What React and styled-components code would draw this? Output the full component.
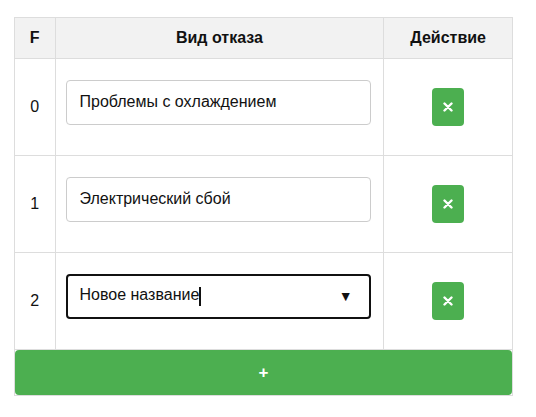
import React from 'react'
import styled, {createGlobalStyle} from 'styled-components'

const GlobalStyle = createGlobalStyle`
    body {
        margin: 0;
        background: #fff;
        font-family: "Liberation Sans", Arial, sans-serif;
        color: #111;
    }
`;

const Page = styled.div`
    padding: 17px 0 0 14px;
`;

const Table = styled.table`
    width: 499px;
    border-collapse: collapse;
    font-size: 16px;
`;

const Th = styled.th`
    background: #f2f2f2;
    border: 1px solid #ddd;
    height: 40px;
    padding: 0;
    font-weight: bold;
    font-size: 16px;
    text-align: center;
    width: ${p => p.w}px;
`;

const Td = styled.td`
    border: 1px solid #ddd;
    height: 96px;
    padding: 0 10px;
    text-align: ${p => p.align || 'center'};
    vertical-align: middle;
`;

const FieldWrap = styled.div`
    margin-bottom: 10px;
`;

const TextInput = styled.input`
    box-sizing: border-box;
    width: 305px;
    height: 45px;
    border: 1px solid #ccc;
    border-radius: 4px;
    padding: 0 13px;
    font-family: "Liberation Sans", Arial, sans-serif;
    font-size: 16px;
    color: #111;
    outline: none;
    display: block;
`;

const SelectBox = styled.div`
    box-sizing: border-box;
    width: 305px;
    height: 45px;
    border: 2px solid #111;
    border-radius: 4px;
    padding: 0 16px 0 12px;
    display: flex;
    align-items: center;
    justify-content: space-between;
    font-size: 16px;
    color: #111;
`;

const Caret = styled.span`
    display: inline-block;
    width: 2px;
    height: 19px;
    background: #111;
    vertical-align: middle;
`;

const Arrow = styled.span`
    font-size: 14px;
    color: #111;
`;

const DeleteButton = styled.button`
    width: 32px;
    height: 38px;
    border: none;
    border-radius: 4px;
    background: #4caf50;
    display: inline-flex;
    align-items: center;
    justify-content: center;
    padding: 0;
    cursor: pointer;
`;

const FootCell = styled.td`
    border: 1px solid #ddd;
    padding: 0;
`;

const AddButton = styled.button`
    width: 100%;
    height: 45px;
    border: none;
    border-radius: 4px;
    background: #4caf50;
    color: #fff;
    font-family: "Liberation Sans", Arial, sans-serif;
    font-size: 17px;
    font-weight: bold;
    display: block;
    cursor: pointer;
`;

const Cross = () => (
    <svg width="10" height="10" viewBox="0 0 10 10">
        <path d="M1.5 1.5 L8.5 8.5 M8.5 1.5 L1.5 8.5" stroke="#fff" strokeWidth="2.4" strokeLinecap="round"/>
    </svg>
);

const rows = [
    {id: 0, name: 'Проблемы с охлаждением'},
    {id: 1, name: 'Электрический сбой'},
];

export default function App() {
    return (
        <Page>
            <GlobalStyle/>
            <Table>
                <thead>
                <tr>
                    <Th w={40}>F</Th>
                    <Th w={328}>Вид отказа</Th>
                    <Th w={130}>Действие</Th>
                </tr>
                </thead>
                <tbody>
                {rows.map(r => (
                    <tr key={r.id}>
                        <Td>{r.id}</Td>
                        <Td align="left">
                            <FieldWrap>
                                <TextInput defaultValue={r.name}/>
                            </FieldWrap>
                        </Td>
                        <Td><DeleteButton><Cross/></DeleteButton></Td>
                    </tr>
                ))}
                <tr>
                    <Td>2</Td>
                    <Td align="left">
                        <FieldWrap>
                            <SelectBox>
                                <span>Новое название<Caret/></span>
                                <Arrow>▼</Arrow>
                            </SelectBox>
                        </FieldWrap>
                    </Td>
                    <Td><DeleteButton><Cross/></DeleteButton></Td>
                </tr>
                </tbody>
                <tfoot>
                <tr>
                    <FootCell colSpan={3}>
                        <AddButton>+</AddButton>
                    </FootCell>
                </tr>
                </tfoot>
            </Table>
        </Page>
    )
}
